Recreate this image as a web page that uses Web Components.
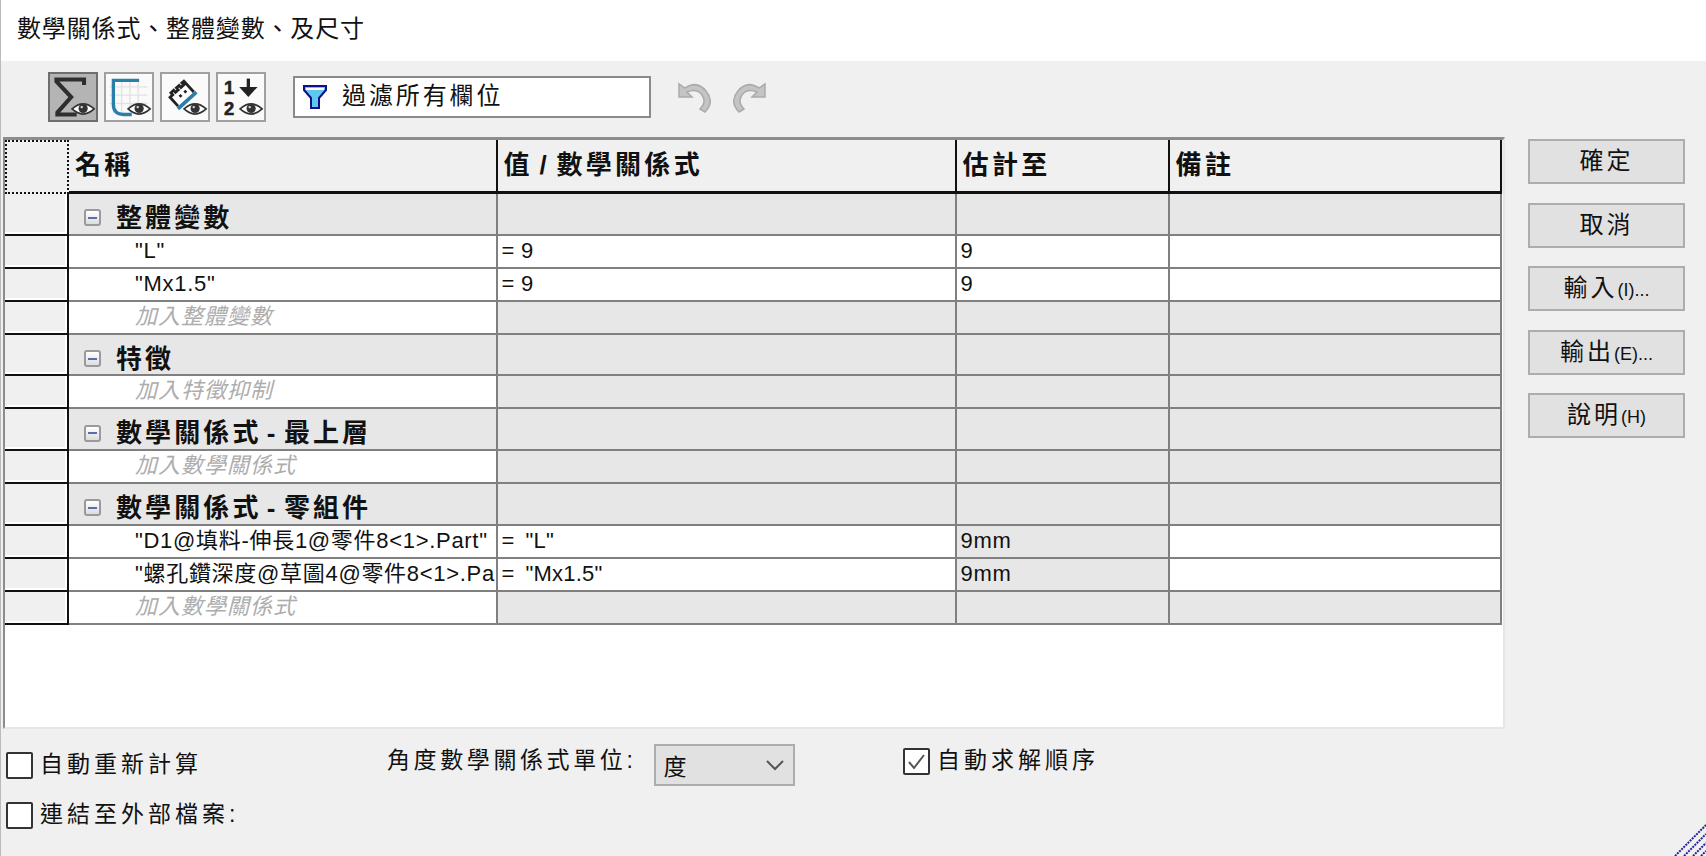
<!DOCTYPE html>
<html lang="zh-Hant">
<head>
<meta charset="utf-8">
<title>數學關係式、整體變數、及尺寸</title>
<style>
  html, body { margin: 0; height: 100%; background: #f0f0f0; overflow: hidden; }
  body { font: 24px "Liberation Sans", "Noto Sans CJK TC", sans-serif; color: #111; }
</style>
</head>
<body>
<eq-dialog caption="數學關係式、整體變數、及尺寸">
  <eq-toolbar slot="toolbar"></eq-toolbar>
  <eq-table slot="table"></eq-table>
  <div slot="side">
    <eq-button>確定</eq-button>
    <eq-button>取消</eq-button>
    <eq-button>輸入<small>(I)...</small></eq-button>
    <eq-button>輸出<small>(E)...</small></eq-button>
    <eq-button>說明<small>(H)</small></eq-button>
  </div>
  <eq-options slot="options"></eq-options>
</eq-dialog>

<script>
const COLOR_FACE = "#f0f0f0";
const COLOR_CELL = "#e7e7e7";
const COLOR_LINE = "#808080";
const COLUMNS = "64px 428.6px 459px 213px 332px";

// Eye used on the four view toggles
const EYE = `
  <path d="M24 38 Q36 27 48 38 Q36 49 24 38Z" fill="#fff" stroke="#333" stroke-width="1.8"/>
  <circle cx="36" cy="37.5" r="5" fill="#333"/>
  <circle cx="34.5" cy="36" r="1.3" fill="#ddd"/>`;

const ICONS = [
  `<path d="M37 12V6H7v2l16 17L8 42v2h21" fill="none" stroke="#2e2e2e" stroke-width="4.4"/>${EYE}`,
  `<path d="M8 6v36M17 6v36M26 6v36M35 6v36M4 14h41M4 23h41M4 32h41" stroke="#e2e2e2" stroke-width="1.5"/>
   <path d="M36 7H8v26q0 11 11 11h9" fill="none" stroke="#2a7fa8" stroke-width="3.6"/>${EYE}`,
  `<g transform="rotate(-42 21 21)">
     <path d="M9 29V16h4v-3h4v3h4v-3h4v3h4v-3h3v16" fill="#fff" stroke="#222" stroke-width="3"/>
     <path d="M17 21h3v3h-3zM24 21h3v3h-3z" fill="#222"/>
     <path d="M7 31h27" stroke="#2a7fa8" stroke-width="4"/>
   </g>${EYE}`,
  `<text x="12" y="22" font-family="Liberation Sans" font-weight="700" font-size="20" text-anchor="middle" fill="#222" stroke="#222" stroke-width=".6">1</text>
   <text x="12" y="45" font-family="Liberation Sans" font-weight="700" font-size="20" text-anchor="middle" fill="#222" stroke="#222" stroke-width=".6">2</text>
   <path d="M33 5v14" stroke="#222" stroke-width="3.6"/><path d="M23 14h20l-10 11z" fill="#222"/>${EYE}`
];

class EqDialog extends HTMLElement {
  constructor() {
    super();
    const shadow = this.attachShadow({ mode: 'open' });
    shadow.innerHTML = `
      <style>
        :host { display: flex; flex-direction: column; height: 856px; position: relative; background: ${COLOR_FACE}; border-left: 1px solid #bbb; box-sizing: border-box; }
        .title { height: 61px; flex: none; background: #fff; box-sizing: border-box; padding: 13px 0 0 16px; font-size: 24px; line-height: 32px; letter-spacing: .85px; }
        .mid { display: flex; flex: none; height: 592px; }
        .side { flex: none; width: 157px; margin-left: 23px; padding-top: 2px; }
        svg.grip { position: absolute; right: 0; bottom: 0; }
      </style>
      <div class="title">${this.getAttribute('caption')}</div>
      <slot name="toolbar"></slot>
      <div class="mid">
        <slot name="table"></slot>
        <div class="side"><slot name="side"></slot></div>
      </div>
      <slot name="options"></slot>
      <svg class="grip" width="32" height="32" viewBox="0 0 32 32">
        <path d="M1 32L32 1M10 32L32 10M19 32L32 19M27 32l5-5" stroke="#22229a" stroke-width="2" stroke-dasharray="2 1" fill="none"/>
      </svg>
    `;
  }
}

class EqToolbar extends HTMLElement {
  constructor() {
    super();
    const shadow = this.attachShadow({ mode: 'open' });
    shadow.innerHTML = `
      <style>
        :host { display: flex; align-items: center; height: 76px; flex: none; box-sizing: border-box; padding: 0 0 4px 47px; }
        .tool { width: 50px; height: 50px; box-sizing: border-box; border: 2px solid #a0a0a0; background: #fafafa; margin-right: 6px; display: block; }
        .tool.on { background: #b4b4b4; border-color: #6e6e6e; }
        .filter { width: 358px; height: 42px; box-sizing: border-box; margin: 0 26px 0 21px; background: #fff; border: 2px solid #8a8a8a; display: flex; align-items: center; gap: 15px; padding-left: 8px; font-size: 24px; letter-spacing: 2.9px; }
        .filter span { line-height: 32px; margin-top: -3px; }
        .hist { margin-right: 22px; display: block; }
      </style>
      ${ICONS.map((d, i) => `<svg class="tool${i ? '' : ' on'}" viewBox="0 0 50 50">${d}</svg>`).join('')}
      <div class="filter">
        <svg width="24" height="26" viewBox="0 0 24 26"><path d="M1 2h22v4l-7 8v10H8V14L1 6z" fill="#5ec8ee" stroke="#10108a" stroke-width="2"/><path d="M3 5h18" stroke="#fff" stroke-width="2"/></svg>
        <span>過濾所有欄位</span>
      </div>
      <svg class="hist" width="34" height="32" viewBox="0 0 34 32"><path d="M2 3v13h13l-5-5q10-4 15 3t-2 14l5 3q10-10 1-21T8 7z" fill="#c4c4c4" stroke="#aaa" stroke-width="1.5"/></svg>
      <svg class="hist" width="34" height="32" viewBox="0 0 34 32"><g transform="matrix(-1 0 0 1 34 0)"><path d="M2 3v13h13l-5-5q10-4 15 3t-2 14l5 3q10-10 1-21T8 7z" fill="#c4c4c4" stroke="#aaa" stroke-width="1.5"/></g></svg>
    `;
  }
}

// One row of the grid; kind = group | item | add
class EqRow extends HTMLElement {
  constructor() {
    super();
    this.attachShadow({ mode: 'open' });
  }

  connectedCallback() {
    const kind = this.getAttribute('kind');
    const label = this.getAttribute('label');
    const cells = JSON.parse(this.getAttribute('cells') || '[]');
    const gray = `<div class="g"></div>`;
    let html = `<div class="h"></div>`;
    if (kind === 'group') {
      html += `<div class="g grp"><span class="box"></span><span>${label}</span></div>${gray}${gray}${gray}`;
    } else if (kind === 'add') {
      html += `<div class="name add">${label}</div>${gray}${gray}${gray}`;
    } else {
      const est = this.hasAttribute('calc') ? 'g' : '';
      html += `<div class="name">${label}</div><div class="val">${cells[0]}</div><div class="${est}">${cells[1]}</div><div></div>`;
    }
    this.shadowRoot.innerHTML = `
      <style>
        :host { display: grid; grid-template-columns: ${COLUMNS}; height: 33px; box-sizing: border-box; font-size: 22px; letter-spacing: .7px; }
        :host([kind=group]) { height: 41.7px; }
        div { box-sizing: border-box; border-right: 2px solid ${COLOR_LINE}; border-bottom: 2px solid ${COLOR_LINE}; white-space: nowrap; overflow: hidden; padding-left: 4px; line-height: 30px; background: #fff; }
        .g { background: ${COLOR_CELL}; }
        .h { background: ${COLOR_FACE}; border-right-color: #111; border-bottom-color: #111; box-shadow: inset -2px -2px 0 #fff; }
        .name { padding-left: 66px; }
        .name.add { font-style: italic; color: #adadad; letter-spacing: 1px; }
        .val { letter-spacing: .2px; }
        .grp { display: flex; align-items: center; gap: 15px; padding: 8px 0 0 15px; font-size: 26px; font-weight: 700; letter-spacing: 3.1px; word-spacing: -5px; line-height: 32px; }
        .box { flex: none; width: 17px; height: 17px; box-sizing: border-box; border: 2px solid #9a9a9a; border-radius: 3px; background: linear-gradient(#fff, #ddd); display: flex; align-items: center; justify-content: center; }
        .box::before { content: ""; width: 9px; height: 2px; background: #5a6ea8; }
      </style>
      ${html}
    `;
  }
}

class EqTable extends HTMLElement {
  constructor() {
    super();
    const shadow = this.attachShadow({ mode: 'open' });
    const rows = [
      ['group', '整體變數'],
      ['item', '"L"', ['= 9', '9']],
      ['item', '"Mx1.5"', ['= 9', '9']],
      ['add', '加入整體變數'],
      ['group', '特徵'],
      ['add', '加入特徵抑制'],
      ['group', '數學關係式 - 最上層'],
      ['add', '加入數學關係式'],
      ['group', '數學關係式 - 零組件'],
      ['item', '"D1@填料-伸長1@零件8&lt;1&gt;.Part"', ['=&nbsp;&thinsp;"L"', '9mm'], true],
      // the reference cuts this name at the column edge
      ['item', '"螺孔鑽深度@草圖4@零件8&lt;1&gt;.Pa', ['=&nbsp;&thinsp;"Mx1.5"', '9mm'], true],
      ['add', '加入數學關係式']
    ];
    shadow.innerHTML = `
      <style>
        :host { display: block; width: 1502px; height: 592px; flex: none; margin-left: 2px; box-sizing: border-box; background: #fff; border-top: 3px solid #8c8c8c; border-left: 2px solid #8c8c8c; border-right: 2px solid #e6e6e6; border-bottom: 2px solid #e6e6e6; overflow: hidden; }
        .hdr { display: grid; grid-template-columns: ${COLUMNS}; height: 54px; font-size: 26px; font-weight: 700; letter-spacing: 3.3px; background: ${COLOR_FACE}; }
        .hdr div { box-sizing: border-box; border-right: 2px solid #111; border-bottom: 3px solid #111; padding-left: 6px; line-height: 51px; white-space: nowrap; word-spacing: -4px; }
        .hdr .corner { border: 2px dotted #111; background: ${COLOR_FACE}; }
      </style>
      <div class="hdr"><div class="corner"></div><div>名稱</div><div>值 / 數學關係式</div><div>估計至</div><div>備註</div></div>
    `;
    for (const [kind, label, cells, calc] of rows) {
      const row = document.createElement('eq-row');
      row.setAttribute('kind', kind);
      row.setAttribute('label', label);
      if (cells) row.setAttribute('cells', JSON.stringify(cells));
      if (calc) row.setAttribute('calc', '');
      shadow.appendChild(row);
    }
  }
}

class EqButton extends HTMLElement {
  constructor() {
    super();
    const shadow = this.attachShadow({ mode: 'open' });
    shadow.innerHTML = `
      <style>
        :host { display: block; width: 157px; height: 45px; box-sizing: border-box; margin-bottom: 18.5px; background: #e1e1e1; border: 2px solid #adadad; font-size: 24px; line-height: 40px; text-align: center; letter-spacing: 3px; white-space: nowrap; }
        ::slotted(small) { font-size: 18px; letter-spacing: 0; }
      </style>
      <slot></slot>
    `;
  }
}

class EqCheck extends HTMLElement {
  constructor() {
    super();
    const shadow = this.attachShadow({ mode: 'open' });
    shadow.innerHTML = `
      <style>
        :host { display: inline-flex; align-items: center; gap: 7px; font-size: 23px; letter-spacing: 4px; white-space: nowrap; line-height: 27px; }
        span { margin-top: -3px; }
        .b { width: 27px; height: 27px; box-sizing: border-box; border: 2px solid #333; border-radius: 2px; background: #fff; display: block; flex: none; }
      </style>
      <svg class="b" viewBox="0 0 23 23">${this.hasAttribute('checked') ? '<path d="M4 12l5 6 10-13" fill="none" stroke="#555" stroke-width="2"/>' : ''}</svg>
      <span><slot></slot></span>
    `;
  }
}

class EqOptions extends HTMLElement {
  constructor() {
    super();
    const shadow = this.attachShadow({ mode: 'open' });
    shadow.innerHTML = `
      <style>
        :host { display: grid; grid-template-columns: 381px 516px 1fr; grid-template-rows: 50px 46px; padding: 23px 0 0 5px; font-size: 23px; }
        .check { align-self: start; }
        .angle { display: flex; align-items: flex-start; grid-row: 1 / 3; letter-spacing: 3.6px; white-space: nowrap; }
        .angle > span { margin-top: -8px; line-height: 32px; }
        .sel { width: 141px; height: 42px; box-sizing: border-box; margin: -8px 0 0 18px; background: #e1e1e1; border: 2px solid #adadad; display: flex; align-items: center; justify-content: space-between; padding: 0 8px 0 7px; }
        .solve { grid-row: 1; grid-column: 3; align-self: start; margin-top: -4px; }
      </style>
      <eq-check class="check">自動重新計算</eq-check>
      <div class="angle"><span>角度數學關係式單位:</span><div class="sel"><span>度</span><svg width="20" height="12" viewBox="0 0 20 12"><path d="M2 2l8 8 8-8" fill="none" stroke="#555" stroke-width="2"/></svg></div></div>
      <eq-check class="solve" checked>自動求解順序</eq-check>
      <eq-check class="check" style="grid-column:1;grid-row:2">連結至外部檔案:</eq-check>
    `;
  }
}

customElements.define('eq-row', EqRow);
customElements.define('eq-dialog', EqDialog);
customElements.define('eq-toolbar', EqToolbar);
customElements.define('eq-table', EqTable);
customElements.define('eq-button', EqButton);
customElements.define('eq-check', EqCheck);
customElements.define('eq-options', EqOptions);
</script>
</body>
</html>
